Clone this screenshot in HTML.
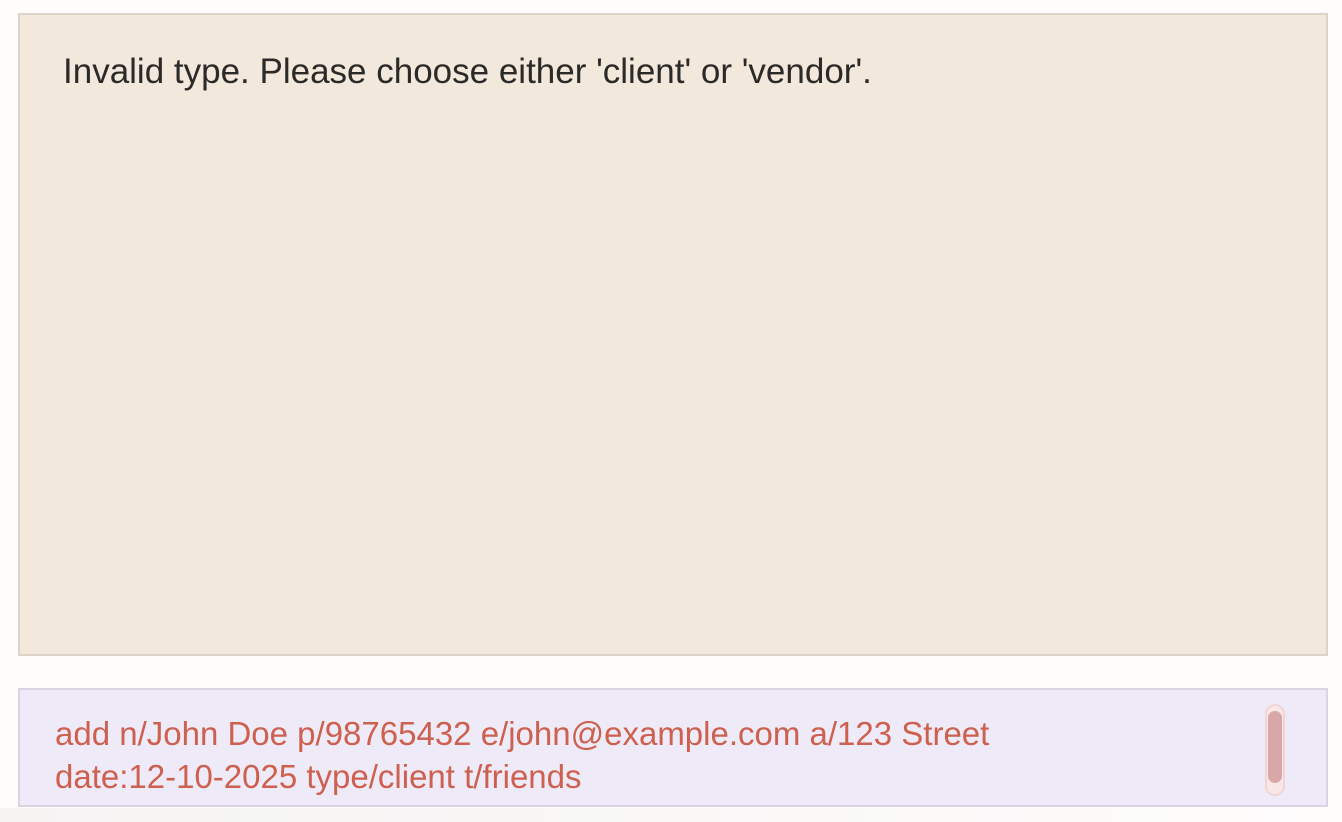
<!DOCTYPE html>
<html><head><meta charset="utf-8"><style>
html,body{margin:0;padding:0;width:1342px;height:822px;overflow:hidden;background:#fefdfc;font-family:"Liberation Sans",sans-serif;}
.bot{position:absolute;left:0;top:808px;width:1342px;height:14px;background:linear-gradient(90deg,#f5f4f3,#f9f8f7 50%,#fefdfc);}
.top{position:absolute;left:18px;top:13px;width:1306px;height:639px;background:#f3e8dc;border:2px solid #ddd3c8;}
.top div{position:absolute;left:43px;top:37px;font-size:35px;color:#2b2a29;white-space:nowrap;}
.cmd{position:absolute;left:18px;top:688px;width:1306px;height:115px;background:#efeaf8;border:2px solid #d9d4e3;}
.txt{position:absolute;left:35px;top:22px;font-size:33px;line-height:43px;color:#cd604e;white-space:nowrap;}
.tr{position:absolute;left:1245px;top:14px;width:16px;height:88px;border:2px solid #f0d5d4;background:#f9e6e6;border-radius:10px;}
.th{position:absolute;left:1px;top:5px;width:14px;height:72px;background:#d8a7a7;border-radius:8px;}
</style></head><body>
<div class="top"><div>Invalid type. Please choose either 'client' or 'vendor'.</div></div>
<div class="cmd"><div class="txt">add n/John Doe p/98765432 e/john@example.com a/123 Street<br>date:12-10-2025 type/client t/friends</div><div class="tr"><div class="th"></div></div></div>
<div class="bot"></div>
</body></html>
